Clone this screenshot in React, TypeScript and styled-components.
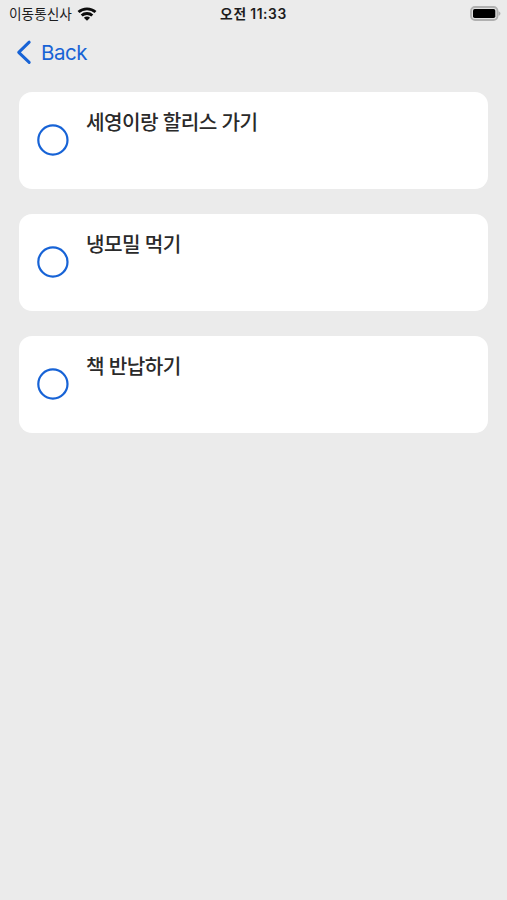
import React from "react";
import styled, { createGlobalStyle } from "styled-components";

const GlobalStyle = createGlobalStyle`
  * { box-sizing: border-box; }
  body { margin: 0; background: #ebebeb; }
`;

const Screen = styled.div`
  display: flex;
  flex-direction: column;
  min-height: 900px;
  background: #ebebeb;
  font-family: Inter, "Noto Sans CJK KR", sans-serif;
`;

const StatusBar = styled.header`
  display: grid;
  grid-template-columns: 1fr auto 1fr;
  align-items: center;
  height: 27px;
  padding: 0 6px;
  color: #1c1c1d;
`;

const Carrier = styled.div`
  display: flex;
  align-items: center;
  gap: 5px;
  padding-left: 3px;
  font-size: 13.7px;
  line-height: 20px;
`;

const Clock = styled.time`
  font-size: 13.8px;
  line-height: 20px;
  font-weight: 600;
  letter-spacing: 0.6px;
  word-spacing: -0.5px;
  white-space: nowrap;
`;

const Battery = styled.svg`
  display: block;
  justify-self: end;
`;

const NavBar = styled.nav`
  display: flex;
  height: 64.5px;
  padding: 12px 16px 0;
`;

const BackButton = styled.button`
  display: flex;
  align-items: center;
  gap: 9px;
  height: 27px;
  padding: 0;
  border: 0;
  background: none;
  color: #1763d6;
  font-family: inherit;
  font-size: 20.5px;
  letter-spacing: -0.5px;
  line-height: 27px;
`;

const TodoList = styled.ul`
  display: flex;
  flex-direction: column;
  gap: 24.5px;
  margin: 0;
  padding: 0 18.6px 0 19.4px;
  list-style: none;
`;

const TodoCard = styled.li`
  display: flex;
  height: 97.5px;
  padding: 0 17.5px;
  border-radius: 13px;
  background: #fff;
`;

const CheckCircle = styled.svg`
  flex: none;
  display: block;
  align-self: center;
`;

const TodoTitle = styled.span`
  margin: 17.5px 0 0 17.2px;
  color: #2a2a2a;
  font-size: 20.2px;
  font-weight: 500;
  letter-spacing: -0.6px;
  line-height: 28px;
`;

const todos = ["세영이랑 할리스 가기", "냉모밀 먹기", "책 반납하기"];

export default function App() {
  return (
    <Screen>
      <GlobalStyle />
      <StatusBar>
        <Carrier>
          이동통신사
          <svg width="20" height="14" viewBox="0 0 20 14" fill="none" stroke="#0c0c0c" strokeWidth="2.8">
            <path d="M1.5 5.1C6.2.7 13.8.7 18.5 5.1" />
            <path d="M4.7 8.6c2.9-2.8 7.7-2.8 10.6 0" />
            <path d="M10 13.7 6.9 10.8c1.6-1.6 4.6-1.6 6.2 0Z" fill="#0c0c0c" stroke="none" />
          </svg>
        </Carrier>
        <Clock>오전 11:33</Clock>
        <Battery width="31" height="15" viewBox="0 0 31 15">
          <rect x="1" y="1" width="26.5" height="13" rx="4" fill="#e0e0e0" stroke="#b0b0b0" strokeWidth="1.8" />
          <rect x="3" y="3" width="22.3" height="9" rx="1.7" fill="#000" />
          <path d="M28.5 5.2c2.6.8 2.6 3.8 0 4.6Z" fill="#b0b0b0" />
        </Battery>
      </StatusBar>
      <NavBar>
        <BackButton>
          <svg width="16" height="25" viewBox="0 0 16 25" fill="none" stroke="currentColor" strokeWidth="3" strokeLinecap="round" strokeLinejoin="round">
            <path d="M13.2 2.2 2.7 12.3 13.2 22.4" />
          </svg>
          Back
        </BackButton>
      </NavBar>
      <TodoList>
        {todos.map((title) => (
          <TodoCard key={title}>
            <CheckCircle width="32" height="32" viewBox="0 0 32 32">
              <circle cx="15.9" cy="16" r="14.6" fill="none" stroke="#1763d6" strokeWidth="2.2" />
            </CheckCircle>
            <TodoTitle>{title}</TodoTitle>
          </TodoCard>
        ))}
      </TodoList>
    </Screen>
  );
}
